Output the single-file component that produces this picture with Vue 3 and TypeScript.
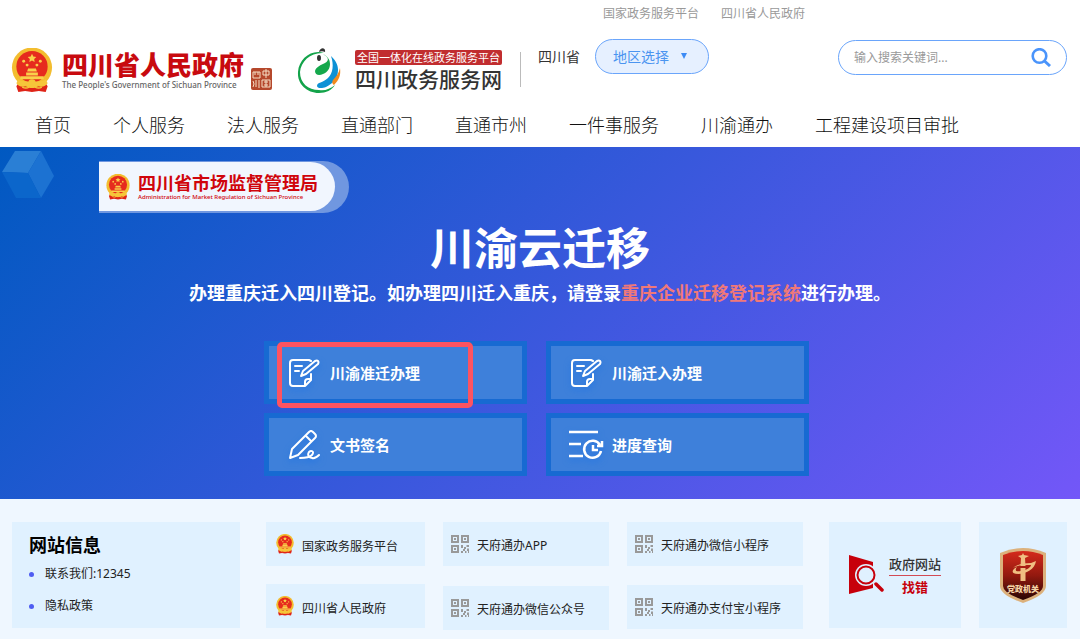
<script setup lang="ts">
import { ref } from 'vue'

interface Service {
  label: string
  icon: 'form' | 'sign' | 'progress'
}

interface QuickColumn {
  kind: 'emblem' | 'qr'
  name: string
  items: string[]
}

const topLinks: string[] = ['国家政务服务平台', '四川省人民政府']
const navItems: string[] = ['首页', '个人服务', '法人服务', '直通部门', '直通市州', '一件事服务', '川渝通办', '工程建设项目审批']
const services: Service[] = [
  { label: '川渝准迁办理', icon: 'form' },
  { label: '川渝迁入办理', icon: 'form' },
  { label: '文书签名', icon: 'sign' },
  { label: '进度查询', icon: 'progress' },
]
const quickColumns: QuickColumn[] = [
  { kind: 'emblem', name: 'col-gov', items: ['国家政务服务平台', '四川省人民政府'] },
  { kind: 'qr', name: 'col-app', items: ['天府通办APP', '天府通办微信公众号'] },
  { kind: 'qr', name: 'col-mini', items: ['天府通办微信小程序', '天府通办支付宝小程序'] },
]

const keyword = ref('')
const region = ref('地区选择')
</script>

<template>
  <div class="page">
    <svg class="defs" aria-hidden="true">
      <symbol id="emblem" viewBox="0 0 42 46">
        <path d="M9 33h24l4 6-2 6-7-1-7 1-7-1-7 1-2-6z" fill="#df2418" />
        <circle cx="21" cy="20" r="20.5" fill="#f3bd2f" />
        <circle cx="21" cy="19" r="16" fill="#e62b1e" />
        <path d="M21 6l1.300 2.800 3.100.4-2.200 2.100.5 3-2.700-1.500-2.700 1.500.5-3-2.200-2.100 3.100-.4z" fill="#f9d04a" />
        <g fill="#f9d04a">
          <circle cx="12.500" cy="13.500" r="1.500" /><circle cx="29.500" cy="13.500" r="1.500" />
          <circle cx="16" cy="17.500" r="1.500" /><circle cx="26" cy="17.500" r="1.500" />
          <path d="M17 21h8l1 3H16zM15 25h12v3H15zM9 29h24v3H9z" />
        </g>
        <path d="M7 32c4 3 9 1 14 4 5-3 10-1 14-4l2 4c-4 5-8 4-10 2-3 4-9 4-12 0-2 2-6 3-10-2z" fill="#f6c63a" />
        <circle cx="21" cy="36" r="4" fill="#f6c63a" />
        <path d="M11 40q4 2 7 0M24 40q4 2 7 0" fill="none" stroke="#f6c63a" stroke-width="1.500" />
      </symbol>
      <symbol id="qr" viewBox="0 0 18 18">
        <g fill="none" stroke="#999" stroke-width="2">
          <path d="M1 1h6v6H1zM11 1h6v6h-6zM1 11h6v6H1z" />
        </g>
        <g fill="#999">
          <path d="M3 3h2v2H3zM13 3h2v2h-2zM3 13h2v2H3z" />
          <path d="M10 10h2v3h-2zM13 12h2v2h-2zM15.500 10H18v2h-2.500zM12 14h2v2h-2zM10 16h2v2h-2zM14 16h1.500v2H14zM16 13.500h2V18h-1v-2h-1z" />
        </g>
      </symbol>
    </svg>

    <header class="header">
      <div class="top-links">
        <a v-for="link in topLinks" :key="link" href="#">{{ link }}</a>
      </div>

      <div class="brand-row">
        <a class="gov-brand" href="#">
          <svg class="gov-emblem" aria-hidden="true"><use href="#emblem" /></svg>
          <span class="gov-words">
            <span class="gov-name">四川省人民政府</span>
            <span class="gov-en">The People's Government of Sichuan Province</span>
          </span>
          <svg class="seal" viewBox="0 0 21 22" aria-hidden="true">
            <rect width="21" height="22" rx="2" fill="#b5482c" />
            <g fill="none" stroke="#f6dfc6" stroke-width="1">
              <path d="M2 4h7v6H2zM4 4v3M7 4v3M2 13q2 3 0 6M5 12v7M8 12v8" />
              <path d="M12 3h6v4h-6zM15 1v9M11 12h8v7h-8zM13 14h4M13 17h4M15 12v7" />
            </g>
          </svg>
        </a>

        <a class="service-brand" href="#">
          <svg class="panda" viewBox="0 0 44 46" aria-hidden="true">
            <path d="M27 5C14 1 2 11 1 24c-1 12 9 21 21 21 7 0 13-3 16-8-5 4-10 6-16 5C11 42 3 35 3 24 4 13 14 4 27 5z" fill="#13a34a" />
            <path d="M26 6c5 3 7 6 2 9-4 2-9 4-10 8 0 4 4 5 8 3 5-2 7-6 7-10 0-5-3-8-7-10z" fill="#14a84c" />
            <path d="M34 8c4 4 7 8 7 14 0 9-6 14-12 17-5 2-9 1-9-1 0-4 6-3 11-8 5-5 6-13 3-22z" fill="#0d91d5" />
            <path d="M43 20c1 7-1 12-6 17q-3-2-1-5c3-3 6-7 7-12z" fill="#f28b1d" />
            <path d="M22 4c1-5 7-5 6 0-2-1-4-1-6 0z" fill="#333" />
            <ellipse cx="22" cy="10" rx="2" ry="3" fill="#333" />
          </svg>
          <span class="service-words">
            <span class="service-tag">全国一体化在线政务服务平台</span>
            <span class="service-name">四川政务服务网</span>
          </span>
        </a>

        <div class="region">
          <span class="divider"></span>
          <span class="province">四川省</span>
          <span class="region-picker">
            <select v-model="region" aria-label="地区选择">
              <option>地区选择</option>
            </select>
            <svg class="caret" viewBox="0 0 6 6" aria-hidden="true"><path d="M0 0h6L3 6z" fill="#3d8bf5" /></svg>
          </span>
        </div>

        <form class="search" @submit.prevent>
          <input v-model="keyword" type="text" aria-label="搜索" placeholder="输入搜索关键词..." />
          <button type="submit" aria-label="搜索">
            <svg viewBox="0 0 20 19" aria-hidden="true">
              <circle cx="8.500" cy="8" r="6.800" fill="none" stroke="#4a94fb" stroke-width="2.600" />
              <path d="M13.500 13l5.500 5" stroke="#4a94fb" stroke-width="3" />
            </svg>
          </button>
        </form>
      </div>

      <nav class="nav">
        <a v-for="item in navItems" :key="item" href="#">{{ item }}</a>
      </nav>
    </header>

    <main class="hero">
      <svg class="cube" viewBox="0 0 52 47" aria-hidden="true">
        <path d="M13 0h26L26 22 0 21z" fill="#2a7fd5" />
        <path d="M39 0l13 25-13 22-13-25z" fill="#1c72d2" />
        <path d="M0 21l26 1 13 25H14z" fill="#0b66cb" />
      </svg>
      <div class="dept-shadow">
        <div class="dept">
          <svg class="dept-emblem" aria-hidden="true"><use href="#emblem" /></svg>
          <div class="dept-words">
            <span class="dept-name">四川省市场监督管理局</span>
            <span class="dept-en">Administration for Market Regulation of Sichuan Province</span>
          </div>
        </div>
      </div>

      <h1>川渝云迁移</h1>
      <p class="notice">办理重庆迁入四川登记。如办理四川迁入重庆，请登录<a href="#">重庆企业迁移登记系统</a>进行办理。</p>

      <div class="services">
        <button v-for="service in services" :key="service.label" class="service" type="button">
          <svg v-if="service.icon === 'form'" class="service-icon" viewBox="-2 0 36 34" aria-hidden="true">
            <path d="M22 5l-2-1H4a3 3 0 0 0-3 3v20a3 3 0 0 0 3 3h12l6-6v-6M16 30v-4q0-3 3-3h3M6 10h7M6 15h4" />
            <path d="M12 20l2-5L26 5q2-1 3 0t0 3L17 18z" />
          </svg>
          <svg v-else-if="service.icon === 'sign'" class="service-icon" viewBox="-2 0 36 34" aria-hidden="true">
            <path d="M1 30l2-9L20 4q2-2 4 0l2 2q2 2 0 4L9 27zM17 8l5 5" />
            <path d="M11 30c4 0 9 0 12-3 3-4-1-5-3-3-2 3 0 6 3 6 3 1 5-1 7-3" />
          </svg>
          <svg v-else class="service-icon bold" viewBox="0 0 36 34" aria-hidden="true">
            <path d="M0 4h29M0 16h12M0 28h14M24 17v5h5" />
            <path d="M31 17a8.500 8.500 0 1 0 1 6M33 13v5h-5" />
          </svg>
          <span>{{ service.label }}</span>
        </button>
        <span class="highlight" aria-hidden="true"></span>
      </div>
    </main>

    <footer class="footer">
      <section class="card info">
        <h2>网站信息</h2>
        <ul>
          <li><a href="#">联系我们:12345</a></li>
          <li><a href="#">隐私政策</a></li>
        </ul>
      </section>

      <div class="quick">
        <div v-for="column in quickColumns" :key="column.name" class="quick-column" :class="column.name">
          <a v-for="item in column.items" :key="item" class="card quick-link" :class="column.kind" href="#">
            <svg class="quick-icon" aria-hidden="true"><use :href="'#' + column.kind" /></svg>
            <span>{{ item }}</span>
          </a>
        </div>
      </div>

      <div class="badges">
        <a class="card report" href="#">
          <svg class="report-icon" viewBox="0 0 35 40" aria-hidden="true">
            <path d="M0 0l24 7v26L0 39z" fill="#c7000b" />
            <circle cx="17" cy="20" r="11" fill="#e0f1ff" />
            <circle cx="17" cy="20" r="8.500" fill="#e0f1ff" stroke="#c7000b" stroke-width="2" />
            <path d="M26 28l7 7" stroke="#e0f1ff" stroke-width="6" />
            <path d="M27 29l6 6" stroke="#c7000b" stroke-width="3.500" stroke-linecap="round" />
          </svg>
          <span class="report-words">
            <span class="report-top">政府网站</span>
            <span class="report-bottom">找错</span>
          </span>
        </a>
        <a class="card party" href="#">
          <svg class="shield" viewBox="0 0 46 55" aria-hidden="true">
            <defs>
              <linearGradient id="shieldFill" x1="0" y1="0" x2="0" y2="1">
                <stop offset="0" stop-color="#d52a1b" />
                <stop offset="0.500" stop-color="#93190f" />
                <stop offset="1" stop-color="#280504" />
              </linearGradient>
            </defs>
            <path d="M23 0q11 0 23 5v33q0 9-23 17Q0 47 0 38V5Q12 0 23 0z" fill="#dcb17c" />
            <path d="M23 3q10 0 20 4v31q0 7-20 14Q3 45 3 38V7q10-4 20-4z" fill="url(#shieldFill)" />
            <g fill="#f0bf82">
              <path d="M21 10l-3-2 4-1 1-2 1 2 5 1-4 2 .5 8h-5zM20.500 20h5v13h-5z" />
              <path d="M13 20c4-4 12-5 18-5l5-2c-1 8-10 13-18 13-7 0-7-4-1-7-3 4 0 5 4 4 6-1 10-4 10-6-6 0-14 0-18 3z" />
            </g>
            <text x="23" y="44" text-anchor="middle" class="shield-text">党政机关</text>
          </svg>
        </a>
      </div>
    </footer>
  </div>
</template>

<style>
body {
  margin: 0;
  background: #eff7ff;
}
</style>

<style scoped>
.page {
  min-height: 100vh;
  display: flex;
  flex-direction: column;
  font-family: "Noto Sans", "Noto Sans CJK SC", sans-serif;
  font-size: 12px;
  color: #222;
}
.page *, .page { box-sizing: border-box; }
.defs { position: absolute; width: 0; height: 0; }
a { color: inherit; text-decoration: none; }
svg { display: block; flex: none; }
button, input, select { font-family: inherit; }

.header { background: #fff; }
.top-links {
  display: flex;
  justify-content: flex-end;
  gap: 22px;
  padding-right: 275px;
  line-height: 27px;
  height: 26px;
  color: #999;
}
.brand-row {
  display: flex;
  align-items: flex-start;
  height: 77px;
  padding: 0 13px 0 11px;
}
.gov-brand { display: flex; padding-top: 22px; }
.gov-emblem { width: 42px; height: 45px; }
.gov-words { display: flex; flex-direction: column; width: 198px; padding-left: 9px; white-space: nowrap; }
.gov-name {
  font-family: "Noto Sans CJK SC", sans-serif;
  font-size: 26px;
  line-height: 32px;
  font-weight: 900;
  color: #c80a0f;
}
.gov-en { font-size: 8px; line-height: 10px; font-weight: 500; color: #666; }
.seal { width: 21px; height: 22px; margin-top: 20px; }
.service-brand { display: flex; gap: 14px; padding: 22px 0 0 25px; }
.panda { width: 44px; height: 46px; }
.service-words { display: flex; flex-direction: column; white-space: nowrap; padding-top: 2px; }
.service-tag {
  padding: 0 2px;
  border-radius: 2px;
  background: #c12d2f;
  color: #fff;
  font-size: 11px;
  line-height: 15px;
}
.service-name { font-size: 21px; line-height: 28px; font-weight: 500; color: #333; }
.region { display: flex; padding-top: 13px; margin-left: 18px; }
.divider { width: 1px; height: 35px; margin-top: 13px; background: #bbb; }
.province { margin-left: 17px; font-size: 14px; line-height: 35px; white-space: nowrap; color: #333; }
.region-picker { position: relative; margin-left: 15px; }
.region-picker select {
  display: block;
  appearance: none;
  width: 114px;
  height: 35px;
  padding: 0 17px;
  border: 1px solid #6aa5fb;
  border-radius: 18px;
  background: #e6f0ff;
  color: #4a94f0;
  font-size: 14px;
}
.caret { position: absolute; right: 22px; top: 14px; width: 6px; height: 6px; pointer-events: none; }
.search {
  display: flex;
  align-items: center;
  width: 229px;
  height: 35px;
  margin: 14px 0 0 auto;
  padding: 0 15px;
  border: 1px solid #6aa5fb;
  border-radius: 18px;
}
.search input {
  flex: 1;
  min-width: 0;
  padding: 0;
  border: 0;
  outline: 0;
  background: none;
  font-size: 12px;
  color: #333;
}
.search input::placeholder { color: #999; }
.search button { padding: 0; border: 0; background: none; cursor: pointer; }
.search svg { width: 20px; height: 19px; }
.nav {
  display: flex;
  gap: 42px;
  padding-left: 35px;
  font-size: 18px;
  line-height: 44px;
  font-weight: 300;
  color: #111;
  white-space: nowrap;
}

.hero {
  position: relative;
  height: 352px;
  padding-top: 14px;
  background: linear-gradient(135deg, #0059c1, #7357f8);
  color: #fff;
  text-align: center;
}
.cube { position: absolute; left: 2px; top: 4px; width: 52px; height: 47px; }
.dept-shadow {
  width: 250px;
  height: 52px;
  margin-left: 99px;
  padding: 1px 14px 2px 0;
  border-radius: 0 26px 26px 0;
  background: #7097e0;
}
.dept {
  display: flex;
  align-items: center;
  gap: 8px;
  height: 49px;
  padding-left: 7px;
  border-radius: 0 25px 25px 0;
  background: #f1f6fe;
  white-space: nowrap;
}
.dept-emblem { width: 24px; height: 26px; }
.dept-words { display: flex; flex-direction: column; text-align: left; color: #d0050c; }
.dept-name { font-size: 18px; line-height: 21px; font-weight: 700; }
.dept-en { font-size: 6px; line-height: 7px; font-weight: 500; }
h1 { margin: 6px 0 0; font-size: 44px; line-height: 58px; font-weight: 700; }
.notice { margin: 3px 0 0; font-size: 18px; line-height: 26px; font-weight: 700; }
.notice a { color: #f07878; }
.services {
  position: relative;
  display: grid;
  grid-template-columns: 263px 263px;
  gap: 9px 19px;
  width: 552px;
  margin: 35px auto 0;
}
.service {
  display: flex;
  align-items: center;
  gap: 7px;
  height: 63px;
  padding: 0 18px;
  border: 5px solid #176ad2;
  background: #3e80da;
  color: #fff;
  font-size: 15px;
  font-weight: 700;
}
.service-icon {
  width: 36px;
  height: 34px;
  fill: none;
  stroke: #fff;
  stroke-width: 2;
  stroke-linejoin: round;
  stroke-linecap: round;
  filter: drop-shadow(0 3px 3px rgba(20, 110, 230, 0.6));
}
.service-icon.bold { stroke-width: 2.500; stroke-linecap: butt; stroke-linejoin: miter; }
.highlight {
  position: absolute;
  left: 13px;
  top: 1px;
  width: 196px;
  height: 66px;
  border: 5px solid #fd5361;
  border-radius: 5px;
  pointer-events: none;
}

.footer {
  flex: 1;
  display: grid;
  grid-template-columns: minmax(0, 228fr) minmax(0, 537fr) minmax(0, 238fr);
  align-items: start;
  gap: 26px;
  padding: 23px 13px 9px 12px;
  background: #eff7ff;
}
.card { background: #e0f1ff; }
.info { height: 106px; padding: 9px 17px; }
.info h2 { margin: 0; font-size: 18px; line-height: 28px; font-weight: 700; color: #000; }
.info ul { margin: 0; padding: 0; list-style: none; }
.info li { display: flex; align-items: center; gap: 11px; line-height: 30px; margin-bottom: 2px; }
.info li::before { content: ""; width: 5px; height: 5px; border-radius: 50%; background: #4f5df2; }
.quick {
  display: grid;
  grid-template-columns: minmax(0, 159fr) minmax(0, 166fr) minmax(0, 176fr);
  gap: 18px;
}
.quick-column { display: flex; flex-direction: column; gap: 18px; }
.col-app { gap: 20px; }
.col-mini { gap: 19px; }
.quick-link { display: flex; align-items: center; gap: 8px; height: 44px; padding-left: 8px; line-height: 20px; white-space: nowrap; }
.quick-link.emblem { padding-left: 10px; }
.quick-link span { padding-top: 3px; }
.quick-link.emblem span { padding-top: 5px; }
.quick-icon { width: 18px; height: 18px; }
.emblem .quick-icon { height: 20px; }
.badges {
  display: grid;
  grid-template-columns: minmax(0, 132fr) minmax(0, 88fr);
  gap: 18px;
}
.report, .party { display: flex; align-items: center; justify-content: center; height: 106px; }
.report { gap: 5px; }
.report-icon { width: 35px; height: 40px; }
.report-words { display: flex; flex-direction: column; text-align: center; font-size: 13px; line-height: 22px; font-weight: 500; white-space: nowrap; }
.report-top { border-bottom: 1px solid #d34a54; color: #333; }
.report-bottom { color: #c7000b; font-weight: 700; }
.shield { width: 46px; height: 55px; }
.shield-text { font-size: 8px; font-weight: 900; fill: #f5d3a6; }
</style>
